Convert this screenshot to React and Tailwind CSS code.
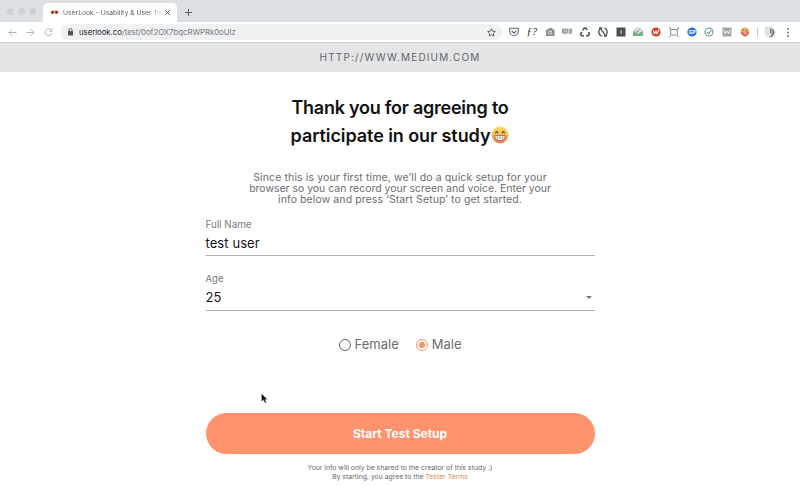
import React from "react";

const toolIcon = "block h-[12px] w-[12px] shrink-0";

function PageIcon({ children, stroke = "#666", fill = "none", width = 1.1 }) {
  return (
    <svg className={toolIcon} viewBox="0 0 12 12" fill={fill} stroke={stroke} strokeWidth={width}>
      {children}
    </svg>
  );
}

function TabBar() {
  return (
    <div className="flex h-[22px] items-end bg-[#dee1e4] pl-[7px]">
      <div className="flex h-[22px] w-[36px] items-center gap-[4px]">
        <i className="h-[7px] w-[7px] rounded-full bg-[#cfd1d3]" />
        <i className="h-[7px] w-[7px] rounded-full bg-[#cfd1d3]" />
        <i className="h-[7px] w-[7px] rounded-full bg-[#cfd1d3]" />
      </div>
      <div className="flex h-[19px] w-[134px] items-center rounded-t-[5px] bg-white pl-[7px]">
        <svg className="h-[5px] w-[9px] shrink-0" viewBox="0 0 9 5">
          <path d="M0 1Q4.5-.5 9 1L8 4Q6 5 4.5 3Q3 5 1 4Z" fill="#ef9a70" />
          <circle cx="2.6" cy="2.3" r="1.1" fill="#222" />
          <circle cx="6.4" cy="2.3" r="1.1" fill="#222" />
        </svg>
        <div className="ml-[4px] w-[98px] whitespace-nowrap bg-gradient-to-r from-[#55585c] from-88% to-[#ddd] bg-clip-text text-[6.75px] leading-[10px] text-transparent">
          UserLook - Usability &amp; User Te
        </div>
        <svg className="ml-[4px] h-[5px] w-[5px] shrink-0" viewBox="0 0 5 5" stroke="#555" strokeWidth="1">
          <path d="M.3.3l4.4 4.4M4.7.3L.3 4.7" />
        </svg>
      </div>
      <svg className="mb-[6px] ml-[8px] h-[7px] w-[7px]" viewBox="0 0 7 7" stroke="#5c5f62">
        <path d="M3.5 0v7M0 3.5h7" />
      </svg>
    </div>
  );
}

function Toolbar() {
  return (
    <div className="flex h-[20px] items-center bg-white pl-[8px] pr-[6px]">
      <div className="flex w-[52px] gap-[9px]">
        <svg className="h-[9px] w-[9px]" viewBox="0 0 9 9" fill="none" stroke="#b5b7b9"><path d="M8.5 4.5H1M4.5 1L1 4.5 4.5 8" /></svg>
        <svg className="h-[9px] w-[9px]" viewBox="0 0 9 9" fill="none" stroke="#b5b7b9"><path d="M.5 4.5H8M4.5 1L8 4.5 4.5 8" /></svg>
        <svg className="h-[9px] w-[9px]" viewBox="0 0 9 9" fill="none" stroke="#b5b7b9"><path d="M7.6 2.5A3.5 3.5 0 1 0 8 5M8 .5V3.3H5.2" /></svg>
      </div>
      <div className="flex h-[16px] w-[442px] shrink-0 items-center rounded-full bg-[#eff1f2] pl-[8px] pr-[6px]">
        <svg className="h-[8px] w-[5px]" viewBox="0 0 5 8"><path d="M1 3V2a1.5 1.5 0 0 1 3 0v1" fill="none" stroke="#505356" /><rect y="3" width="5" height="4.5" rx=".5" fill="#505356" /></svg>
        <div className="ml-[6px] text-[7.8px] leading-[12px] tracking-[-0.03px] text-[#777a7e]"><span className="text-[#222]">userlook.co</span>/test/0of2OX7bqcRWPRk0oUIz</div>
        <svg className="ml-auto h-[9px] w-[9px]" viewBox="0 0 12 12" fill="none" stroke="#555" strokeWidth="1.2"><path d="M6 1l1.5 3.3 3.6.4-2.7 2.4.8 3.6L6 8.9l-3.2 1.8.8-3.6L.9 4.7l3.6-.4z" /></svg>
      </div>
      <div className="ml-[6px] flex items-center gap-[5.75px]">
        <PageIcon><path d="M1.8 2.3h8.4v3.2a4.2 4.2 0 0 1-8.4 0zM3.7 5L6 7.2 8.3 5" /></PageIcon>
        <div className="h-[12px] w-[12px] text-center font-['Liberation_Serif',serif] text-[10.5px] italic leading-[11px] text-[#222]">ƒ?</div>
        <PageIcon stroke="none" fill="#8c8c8c"><path d="M2 3.5h2L5 2h3l1 1.500h1.500V10H2z" /><circle cx="6.2" cy="6.6" r="2" fill="#eee" /><path d="M5.700 5.300h1v2.600h-1zM4.900 6.100h2.600v1H4.900z" /></PageIcon>
        <PageIcon stroke="none" fill="#a2a2a2"><path d="M1 2.5h6.5v5H5L3.5 9.2V7.5H1zM8.200 2.500H11v5H9.500L8 9V7.800h.2z" /><path d="M3 4.500h3v1H3z" fill="#ddd" /></PageIcon>
        <PageIcon stroke="#555" width={1.6}><path d="M3.8 4.3L5.2 2h1.700L8.200 4M9.400 6l1 2-1 1.700H7M5 9.700H2.500l-.9-1.500L3 6" /></PageIcon>
        <PageIcon stroke="#555" width={1.3}><path d="M4 2.300A4.200 4.200 0 0 0 4.800 10M8 9.700A4.200 4.200 0 0 0 7.200 2M2 2h2.500v2.500M10 10H7.500V7.500M4.800 4.500l2.400 3" /></PageIcon>
        <PageIcon stroke="none" fill="#4d4d4d"><path d="M1.500 1.500h9v9h-9z" /><path d="M5.500 4h1v4h-1z" fill="#ddd" /></PageIcon>
        <PageIcon stroke="none"><path d="M2 4l4-2.500L10 4v3H2z" fill="#dfe4e1" stroke="#aaa" strokeWidth=".6" /><path d="M4 5l1.500 1L8 3.500" fill="none" stroke="#777" strokeWidth=".8" /><path d="M1 5l5 3 5-3v5H1z" fill="#72ac88" /></PageIcon>
        <PageIcon stroke="none" fill="#d83c22"><circle cx="6" cy="6" r="4.600" /><path d="M3.300 4.500l1 3L6 5l1 2.700L9 3.500" fill="none" stroke="white" strokeWidth="1.1" /></PageIcon>
        <PageIcon stroke="#888" width={1}><path d="M2.700 3.500h6.600v5.500H2.700zM1 1.800h1.500M9.500 1.800H11M1 10.500h1.500M9.500 10.500H11M1.500 2L3 3.500M10.500 2L9 3.500" /></PageIcon>
        <PageIcon stroke="none" fill="#2878df"><circle cx="6" cy="6" r="4.600" /><text x="2.700" y="7.800" fontSize="5" fontWeight="bold" fill="white">GP</text></PageIcon>
        <PageIcon stroke="#659c78"><circle cx="6" cy="6" r="4" /><path d="M4 6l1.500 1.600L8.500 4" /></PageIcon>
        <PageIcon stroke="none" fill="#a5a5a5"><path d="M1.500 1.500h9v9h-9z" /><path d="M3 4.200l1.200 3.500L6 5l1.800 2.700L9 4.200" fill="none" stroke="white" strokeWidth=".9" /></PageIcon>
        <PageIcon stroke="none"><circle cx="6" cy="5.800" r="4.400" fill="#efb45c" /><path d="M1.600 5.800h8.800Q9.500 9.500 6 10.800 2.500 9.500 1.600 5.800" fill="#e56f58" /><path d="M4 3v2M7.500 3v2" stroke="#a76a4c" /><path d="M4 6.500h4L6 8z" fill="#f8dfb8" /></PageIcon>
      </div>
      <i className="ml-[6px] h-[9px] w-px bg-[#c8c8c8]" />
      <svg className="ml-[6px] h-[12px] w-[12px] shrink-0" viewBox="0 0 12 12"><circle cx="6" cy="6" r="5.700" fill="#e4e2df" /><path d="M6 3q2-1 3.500 1l1 3-2.500 4H5l3-2-2-2z" fill="#707477" /><path d="M7 4h1.500v4H7z" fill="#d8b192" /><path d="M1 2l2-1v2z" fill="#dc9874" /></svg>
      <svg className="ml-auto h-[9px] w-[12px] shrink-0" viewBox="0 0 12 9" fill="#626568"><circle cx="6" cy="1" r=".9" /><circle cx="6" cy="4.500" r=".9" /><circle cx="6" cy="8" r=".9" /></svg>
    </div>
  );
}

function GrinningFace() {
  return (
    <svg className="mb-[3px] ml-px h-[18px] w-[18px]" viewBox="0 0 18 18">
      <defs><linearGradient id="face" x2="0" y2="1"><stop stopColor="#f8e365" /><stop offset=".5" stopColor="#f4b95a" /><stop offset="1" stopColor="#e97955" /></linearGradient></defs>
      <circle cx="9" cy="9" r="8.400" fill="url(#face)" />
      <path d="M4.500 7.200Q5.800 4 7 7.200M11 7.200Q12.200 4 13.500 7.200" stroke="#754725" strokeWidth="1.300" fill="none" />
      <path d="M3.700 9.600h10.600q0 5.200-5.300 5.200t-5.300-5.200z" fill="#fff" stroke="#8a5841" strokeWidth=".8" />
      <path d="M4 12h10M6.500 10v4M9 10v4M11.500 10v4" stroke="#9a8176" strokeWidth=".5" />
    </svg>
  );
}

export default function App() {
  return (
    <main className="flex h-[486px] w-[800px] flex-col overflow-hidden bg-white font-['Inter',sans-serif]">
      <TabBar />
      <Toolbar />
      <header className="flex h-[29.5px] items-center justify-center border-t border-[#cfd2d4] bg-[#e3e5e7] text-[10px] tracking-[1.15px] text-[#63666a]">HTTP://WWW.MEDIUM.COM</header>
      <section className="mx-auto flex w-[389px] flex-col">
        <h1 className="mt-[22.5px] flex flex-col items-center whitespace-nowrap text-[18px] font-semibold leading-[28px] text-[#111]">
          <span className="tracking-[-0.25px]">Thank you for agreeing to</span>
          <span className="flex items-center tracking-[-0.08px]">participate in our study<GrinningFace /></span>
        </h1>
        <p className="mt-[22px] flex flex-col items-center whitespace-nowrap text-[10.5px] leading-[11px] text-[#6c6e70]">
          <span className="tracking-[0.12px]">Since this is your first time, we’ll do a quick setup for your</span>
          <span className="tracking-[-0.02px]">browser so you can record your screen and voice. Enter your</span>
          <span className="tracking-[0.09px]">info below and press ‘Start Setup’ to get started.</span>
        </p>
        <label className="mt-[14px] text-[9.8px] leading-[12px] text-[#77797b]">Full Name</label>
        <div className="flex h-[25px] items-center border-b border-[#b0b0b0] pt-[2px] text-[13px] tracking-[0.08px] text-[#151515]">test user</div>
        <label className="mt-[17px] text-[9.5px] leading-[12px] text-[#77797b]">Age</label>
        <div className="flex h-[26px] items-center justify-between border-b border-[#b0b0b0] pr-[3px] text-[13px] text-[#151515]">25<svg className="h-[3px] w-[6px]" viewBox="0 0 6 3"><path d="M0 0h6L3 3z" fill="#777" /></svg></div>
        <div className="mt-[25px] flex h-[18px] items-center pl-[133px] text-[13px] text-[#6b6d6f]">
          <i className="mr-[4px] h-[12px] w-[12px] rounded-full border border-[#666]" /><span className="tracking-[0.02px]">Female</span>
          <i className="ml-[17px] mr-[4px] flex h-[12px] w-[12px] items-center justify-center rounded-full border border-[#ff8e68]"><i className="h-[6px] w-[6px] rounded-full bg-[#ff8e68]" /></i><span>Male</span>
        </div>
        <button className="mt-[59px] h-[41px] rounded-full bg-[#ff936d] pt-px text-[12px] font-bold text-white">Start Test Setup</button>
        <p className="mt-[9px] text-center text-[6.85px] leading-[9px] text-[#67696b]">Your info will only be shared to the creator of this study :)<br />By starting, you agree to the <span className="text-[#d48650]">Tester Terms</span></p>
      </section>
      <svg className="absolute left-[261px] top-[393px] h-[11px] w-[7px]" viewBox="0 0 7 11"><path d="M.5.5v8l2-1.600L4 10l1.400-.7L4 6.500h2.500z" fill="#111" stroke="#ddd" strokeWidth=".4" /></svg>
    </main>
  );
}
